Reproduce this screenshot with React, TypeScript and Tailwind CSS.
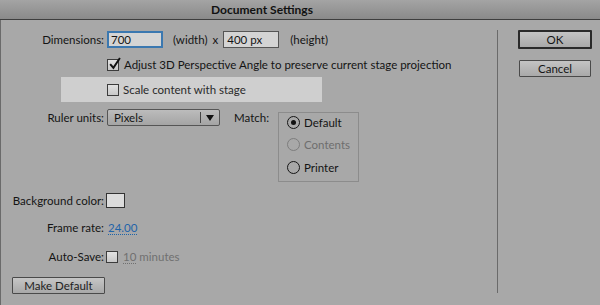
import React from "react";

const font = { fontFamily: "Lato, 'Liberation Sans', sans-serif" };

function Checkbox({ checked = false }: { checked?: boolean }) {
  return (
    <div className="relative w-[12px] h-[12px] border border-[#3c3c3c] bg-gradient-to-b from-[#e2e2e2] to-[#c8c8c8] shrink-0">
      {checked && (
        <svg viewBox="0 0 12 12" className="absolute left-[0px] top-[-3px] w-[13px] h-[13px]">
          <path d="M2 6.5 L5 10 L11 1" fill="none" stroke="#111" strokeWidth="1.8" />
        </svg>
      )}
    </div>
  );
}

function Radio({ selected = false, disabled = false }: { selected?: boolean; disabled?: boolean }) {
  return (
    <div
      className={`w-[13px] h-[13px] rounded-full border-[1.5px] flex items-center justify-center shrink-0 ${
        disabled ? "border-[#7d7d7d]" : "border-[#151515]"
      }`}
    >
      {selected && <div className="w-[5px] h-[5px] rounded-full bg-[#111]" />}
    </div>
  );
}

export default function App() {
  return (
    <div className="w-[600px] h-[305px] overflow-hidden bg-[#a8a8a8] text-[#141414] text-[11.5px] leading-none" style={font}>
      <div className="h-[20px] border-b border-[#3e3e3e] bg-gradient-to-b from-[#a4a4a4] to-[#8a8a8a] flex items-center justify-center pr-[76px]">
        <span className="text-[12px] font-bold text-[#111]">Document Settings</span>
      </div>
      <div className="flex h-[285px] border-l border-[#6a6a6a]">
        {/* left column */}
        <div className="w-[496px] flex flex-col">
          {/* dimensions */}
          <div className="mt-[11px] h-[17px] flex items-center">
            <div className="w-[103px] text-right">Dimensions:</div>
            <div className="ml-[3px] w-[56px] h-[17px] border-2 border-[#3b78b0] bg-[#d4d4d4] flex items-center pl-[2px]">700</div>
            <span className="ml-[10px]">(width)</span>
            <span className="ml-[5px]">x</span>
            <div className="ml-[5px] w-[56px] h-[17px] border border-[#555] bg-[#d4d4d4] flex items-center pl-[3px]">400 px</div>
            <span className="ml-[11px]">(height)</span>
          </div>
          {/* adjust 3d */}
          <div className="mt-[9px] h-[16px] flex items-center pl-[106px]">
            <Checkbox checked />
            <span className="ml-[5px]">Adjust 3D Perspective Angle to preserve current stage projection</span>
          </div>
          {/* scale content band */}
          <div className="mt-[4px] ml-[60px] w-[261px] h-[25px] bg-[#cfcfcf] flex items-center pl-[46px]">
            <Checkbox />
            <span className="ml-[4px] text-[#2a2a2a]">Scale content with stage</span>
          </div>
          {/* ruler units + match */}
          <div className="mt-[7px] flex items-start">
            <div className="h-[17px] flex items-center">
              <div className="w-[103px] text-right">Ruler units:</div>
              <div className="ml-[3px] w-[113px] h-[17px] border border-[#555] rounded-[2px] bg-gradient-to-b from-[#bcbcbc] to-[#a4a4a4] flex items-center">
                <span className="pl-[6px] flex-1">Pixels</span>
                <div className="w-px h-[11px] bg-[#444]" />
                <svg viewBox="0 0 8 6" className="w-[8px] h-[6px] mx-[5px]">
                  <path d="M0 0 H8 L4 6 Z" fill="#111" />
                </svg>
              </div>
              <span className="ml-[14px]">Match:</span>
            </div>
            <div className="ml-[9px] mt-[3px] w-[81px] h-[70px] border border-[#8c8c8c] flex flex-col pl-[8px] pt-[3px]">
              <div className="h-[13px] flex items-center">
                <Radio selected />
                <span className="ml-[4px]">Default</span>
              </div>
              <div className="mt-[9px] h-[13px] flex items-center text-[#6e6e6e]">
                <Radio disabled />
                <span className="ml-[4px]">Contents</span>
              </div>
              <div className="mt-[10px] h-[13px] flex items-center">
                <Radio />
                <span className="ml-[4px]">Printer</span>
              </div>
            </div>
          </div>
          {/* background color */}
          <div className="mt-[11px] h-[15px] flex items-center">
            <div className="w-[103px] text-right">Background color:</div>
            <div className="ml-[2px] w-[19px] h-[15px] border border-[#333] bg-[#dcdcdc]" />
          </div>
          {/* frame rate */}
          <div className="mt-[12px] h-[16px] flex items-center">
            <div className="w-[103px] text-right">Frame rate:</div>
            <span className="ml-[4px] text-[#1f64a8] border-b border-dotted border-[#1f64a8] leading-[13px]">24.00</span>
          </div>
          {/* auto-save */}
          <div className="mt-[13px] h-[16px] flex items-center">
            <div className="w-[103px] text-right">Auto-Save:</div>
            <div className="ml-[2px]">
              <Checkbox />
            </div>
            <span className="ml-[5px] text-[#707070] border-b border-dotted border-[#707070] leading-[13px]">10</span>
            <span className="ml-[3px] text-[#707070]">minutes</span>
          </div>
          {/* make default */}
          <div className="mt-[12px] ml-[11px] w-[93px] h-[17px] border border-[#4a4a4a] rounded-[1px] bg-gradient-to-b from-[#c6c6c6] to-[#a8a8a8] flex items-center justify-center text-[#222]">
            Make Default
          </div>
        </div>
        {/* separator */}
        <div className="mt-[10px] mb-[12px] w-px bg-[#6a6a6a]" />
        {/* right column */}
        <div className="flex flex-col pl-[20px]">
          <div className="mt-[10px] w-[74px] h-[19px] border-2 border-[#2a2a2a] rounded-[1px] bg-gradient-to-b from-[#c4c4c4] to-[#a9a9a9] flex items-center justify-center">
            OK
          </div>
          <div className="mt-[11px] ml-[1px] w-[72px] h-[17px] border border-[#4a4a4a] rounded-[1px] bg-gradient-to-b from-[#c4c4c4] to-[#a9a9a9] flex items-center justify-center">
            Cancel
          </div>
        </div>
      </div>
    </div>
  );
}
